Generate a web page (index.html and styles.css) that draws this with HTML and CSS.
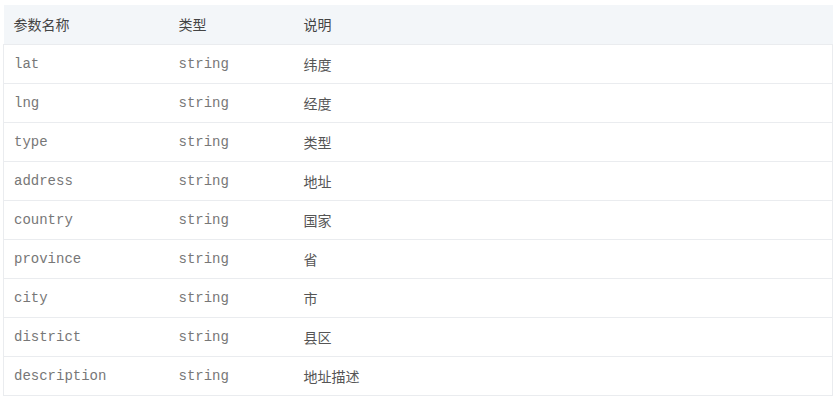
FILE: index.html
```html
<!DOCTYPE html>
<html lang="zh">
<head>
<meta charset="utf-8">
<link rel="stylesheet" href="styles.css">
</head>
<body>
<table class="params">
  <thead>
    <tr><th class="c1">参数名称</th><th class="c2">类型</th><th>说明</th></tr>
  </thead>
  <tbody>
    <tr><td class="code">lat</td><td class="code">string</td><td>纬度</td></tr>
    <tr><td class="code">lng</td><td class="code">string</td><td>经度</td></tr>
    <tr><td class="code">type</td><td class="code">string</td><td>类型</td></tr>
    <tr><td class="code">address</td><td class="code">string</td><td>地址</td></tr>
    <tr><td class="code">country</td><td class="code">string</td><td>国家</td></tr>
    <tr><td class="code">province</td><td class="code">string</td><td>省</td></tr>
    <tr><td class="code">city</td><td class="code">string</td><td>市</td></tr>
    <tr><td class="code">district</td><td class="code">string</td><td>县区</td></tr>
    <tr><td class="code">description</td><td class="code">string</td><td>地址描述</td></tr>
  </tbody>
</table>
</body>
</html>
```
FILE: styles.css
```css
html, body { margin: 0; padding: 0; background: #fff; }
body { padding: 5px 7px 0 3px; }
.params {
  width: 830px;
  border-collapse: collapse;
  font-family: "Noto Sans CJK SC", "Noto Sans", sans-serif;
  font-size: 14px;
  color: #555;
}
.params th {
  background: #f3f6f9;
  font-weight: normal;
  text-align: left;
  height: 39px;
  padding: 0 10px;
  color: #444;
  box-sizing: border-box;
}
.params td {
  height: 39px;
  padding: 0 10px;
  border-top: 1px solid #eaecef;
  box-sizing: border-box;
}
.params tbody tr td:first-child { border-left: 1px solid #eaecef; }
.params tbody tr td:last-child { border-right: 1px solid #eaecef; }
.params tbody tr:last-child td { border-bottom: 1px solid #eaecef; }
.c1 { width: 165px; }
.c2 { width: 125px; }
.code {
  font-family: "Liberation Mono", "Courier New", monospace;
  font-size: 14px;
  color: #777;
  padding-top: 2px;
}
```
